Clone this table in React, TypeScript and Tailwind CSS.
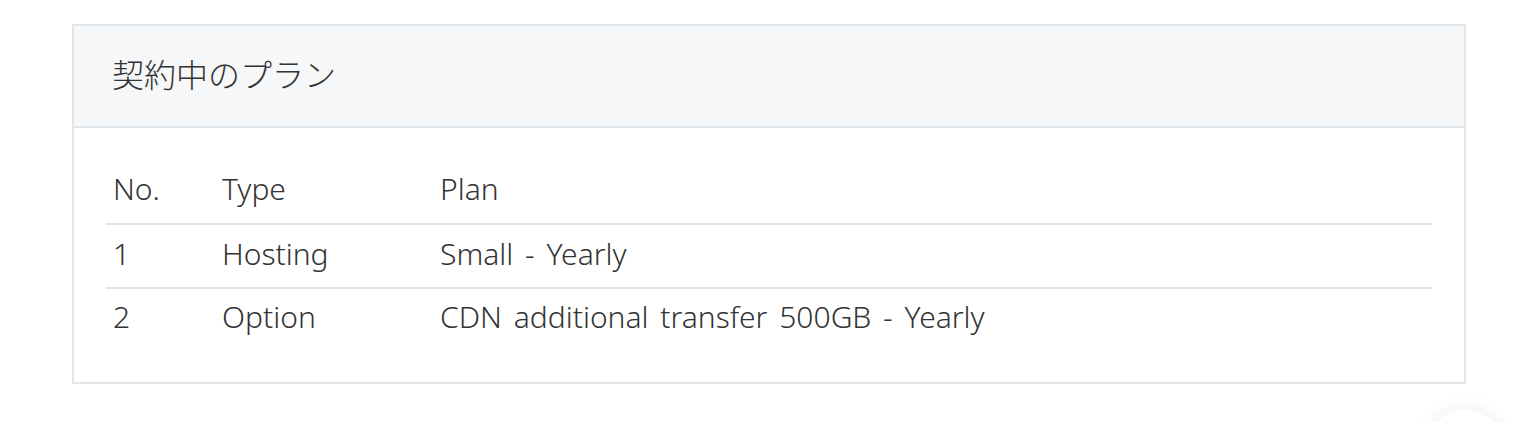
const rows = [
  { no: "1", type: "Hosting", plan: "Small - Yearly" },
  { no: "2", type: "Option", plan: "CDN additional transfer 500GB - Yearly" },
];

export default function App() {
  return (
    <div
      className="relative h-[422px] w-[1538px] overflow-hidden bg-white pl-[72px] pt-[24px] text-[#333333]"
      style={{ fontFamily: '"Noto Sans", "Noto Sans CJK JP", sans-serif' }}
    >
      <section className="w-[1394px] border-2 border-[#dfe5e8]">
        {/* Card header */}
        <div className="flex h-[102px] items-center border-b-2 border-[#dfe5e8] bg-[#f5f7f9] pb-[6px] pl-[38px]">
          <h2
            className="text-[32px] font-light leading-none"
            style={{ fontFamily: '"Noto Sans CJK JP", sans-serif' }}
          >
            契約中のプラン
          </h2>
        </div>

        {/* Card body */}
        <div className="px-[32px] pb-[32px] pt-[32px]">
          <table className="w-full border-collapse text-left text-[30px] font-light [word-spacing:4px]">
            <thead>
              <tr className="border-b-2 border-[#dfe5e8]">
                <th className="h-[64px] w-[109px] px-[7px] pb-[6px] font-light">No.</th>
                <th className="h-[64px] w-[218px] px-[7px] pb-[6px] font-light">Type</th>
                <th className="h-[64px] px-[7px] pb-[6px] font-light">Plan</th>
              </tr>
            </thead>
            <tbody>
              {rows.map((r, i) => {
                const last = i === rows.length - 1;
                const cell = last ? "h-[62px] px-[7px] pb-[6px]" : "h-[64px] px-[7px] pb-[6px]";
                return (
                  <tr key={r.no} className={last ? "" : "border-b-2 border-[#dfe5e8]"}>
                    <td className={cell}>{r.no}</td>
                    <td className={cell}>{r.type}</td>
                    <td className={cell}>{r.plan}</td>
                  </tr>
                );
              })}
            </tbody>
          </table>
        </div>
      </section>

      {/* floating button shadow, mostly below the fold */}
      <div className="absolute left-[1425px] top-[410px] h-[80px] w-[80px] rounded-full bg-white shadow-[0_0_20px_rgba(0,0,0,0.08)]" />
    </div>
  );
}
